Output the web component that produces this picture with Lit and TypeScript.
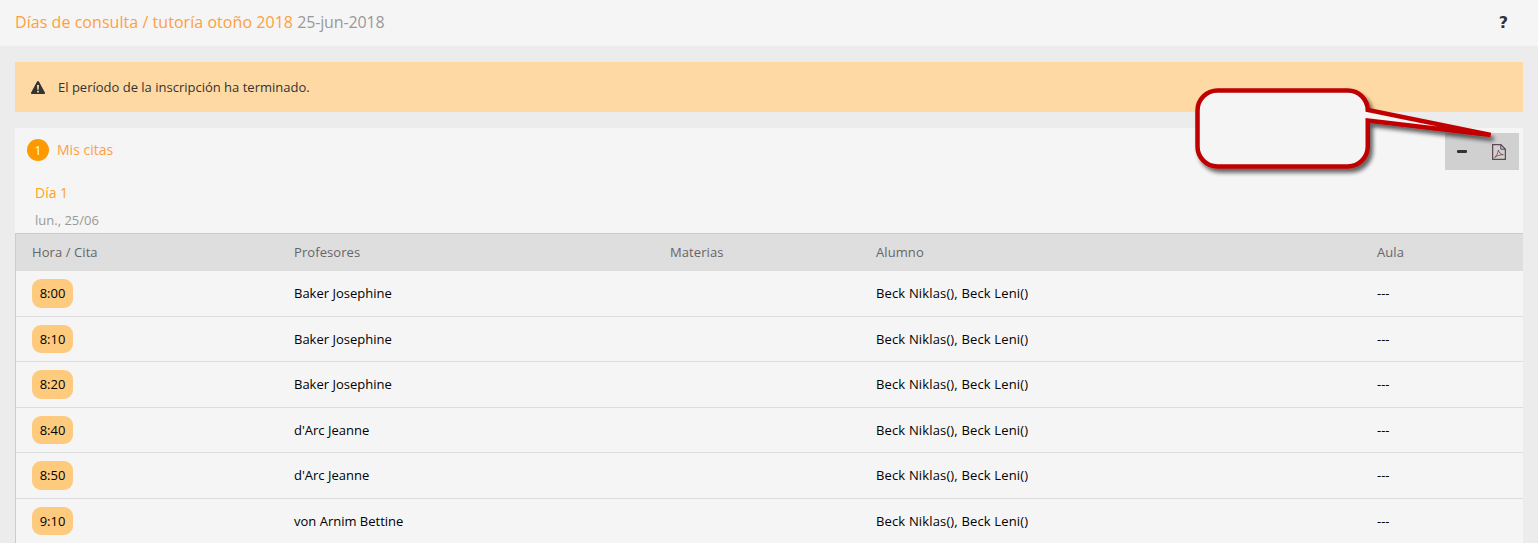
import { LitElement, html, css, svg } from "lit";
import { customElement } from "lit/decorators.js";

const rows = [
  ["8:00", "Baker Josephine"],
  ["8:10", "Baker Josephine"],
  ["8:20", "Baker Josephine"],
  ["8:40", "d'Arc Jeanne"],
  ["8:50", "d'Arc Jeanne"],
  ["9:10", "von Arnim Bettine"],
];

@customElement("app-root")
export class AppRoot extends LitElement {
  static styles = css`
    :host {
      display: block;
      position: relative;
      height: 543px;
      overflow: hidden;
      background: #ececec;
      font-family: "Open Sans", sans-serif;
      font-size: 13px;
      color: #000;
    }
    .top {
      height: 46px;
      box-sizing: border-box;
      background: #f5f5f5;
      padding: 0 30px 2px 15px;
      display: flex;
      align-items: center;
      justify-content: space-between;
      font-size: 16px;
    }
    .title { color: #ff9f40; letter-spacing: .05px; }
    .date { color: #999; letter-spacing: -.15px; }
    .help { font-size: 16px; font-weight: 700; color: #333; font-family: "DejaVu Sans", sans-serif; }
    .alert {
      margin: 16px 15px;
      height: 50px;
      box-sizing: border-box;
      background: #fed9a3;
      padding-left: 16px;
      display: flex;
      align-items: center;
      gap: 13px;
      color: #333;
    }
    .alert svg { width: 14px; height: 13px; flex: none; }
    .panel {
      margin: 0 15px;
      background: #f5f5f5;
      position: relative;
    }
    .panel-head {
      height: 44px;
      box-sizing: border-box;
      padding: 0 0 2px 12px;
      display: flex;
      align-items: center;
      gap: 8px;
      font-size: 14px;
      color: #ff9f40;
    }
    .num {
      width: 22px;
      height: 22px;
      margin-top: 2px;
      border-radius: 50%;
      background: #ff9900;
      color: #fff;
      font-size: 12px;
      display: flex;
      align-items: center;
      justify-content: center;
    }
    .tools {
      position: absolute;
      top: 5px;
      right: 4px;
      width: 74px;
      height: 37px;
      background: #d0d0d0;
    }
    .tools .minus {
      position: absolute;
      left: 12px;
      top: 17px;
      width: 10px;
      height: 3px;
      border-radius: 1px;
      background: #333;
    }
    .tools svg { position: absolute; left: 47px; top: 11px; width: 14px; height: 16px; }
    .day { padding: 11px 0 0 20px; font-size: 14px; line-height: 20px; color: #ffa31a; }
    .sub { padding: 8px 0 0 20px; line-height: 18px; height: 18px; color: #999; margin-bottom: 4px; }
    .table { border-left: 1px solid #ccc; }
    .row {
      display: grid;
      grid-template-columns: 262px 376px 206px 501px 1fr;
      align-items: center;
      height: 45.5px;
      box-sizing: border-box;
      border-bottom: 1px solid #ddd;
    }
    .row > div { padding-left: 16px; }
    .name { letter-spacing: .15px; }
    .row.head {
      height: 38px;
      padding-bottom: 1px;
      background: #dedede;
      border-top: 1px solid #ccc;
      border-bottom: 0;
      color: #666;
      letter-spacing: .08px;
    }
    .badge {
      display: inline-flex;
      width: 41px;
      height: 28.5px;
      border-radius: 9px;
      background: #fecb7e;
      align-items: center;
      justify-content: center;
    }
    .callout {
      position: absolute;
      left: 1190px;
      top: 84px;
      width: 310px;
      height: 95px;
      overflow: visible;
    }
  `;

  render() {
    return html`
      <div class="top">
        <div><span class="title">Días de consulta / tutoría otoño 2018</span> <span class="date">25-jun-2018</span></div>
        <span class="help">?</span>
      </div>
      <div class="alert">
        <svg viewBox="0 0 14 13"><path fill="#333" fill-rule="evenodd" d="M7 0c.4 0 .7.2.9.5l6 11c.3.6-.1 1.500-.9 1.500H1c-.8 0-1.200-.9-.9-1.500l6-11C6.300.2 6.600 0 7 0zM6 4l.3 4.800h1.400L8 4zM6.100 9.700v1.700h1.800V9.700z"/></svg>
        <span>El período de la inscripción ha terminado.</span>
      </div>
      <div class="panel">
        <div class="panel-head"><span class="num">1</span><span>Mis citas</span></div>
        <div class="tools">
          <span class="minus"></span>
          <svg viewBox="0 0 14 16" fill="none">
            <path d="M.6.6h8.200l4.600 4.600v10.200H.6z" stroke="#5f4a50" stroke-width="1.300"/>
            <path d="M8.800.6v4.600h4.600" stroke="#4e3f70" stroke-width="1"/>
            <path d="M2.500 13.500c1.800-1.200 3.300-4 3.900-7.500.7 2.800 2.300 4.200 4.900 4.700-3 0-6 .8-8.800 2.800z" stroke="#7a3f3e" stroke-width=".8"/>
          </svg>
        </div>
        <div class="day">Día 1</div>
        <div class="sub">lun., 25/06</div>
        <div class="table">
          <div class="row head"><div>Hora / Cita</div><div>Profesores</div><div>Materias</div><div>Alumno</div><div>Aula</div></div>
          ${rows.map(
            ([t, p]) => html`<div class="row">
              <div><span class="badge">${t}</span></div>
              <div>${p}</div>
              <div></div>
              <div class="name">Beck Niklas(), Beck Leni()</div>
              <div>---</div>
            </div>`
          )}
        </div>
      </div>
      <svg class="callout" viewBox="0 0 310 95">
        <defs>
          <filter id="s" x="-10%" y="-20%" width="120%" height="150%">
            <feGaussianBlur in="SourceAlpha" stdDeviation="2"/>
            <feOffset dx="3" dy="4"/>
            <feComponentTransfer><feFuncA type="linear" slope=".6"/></feComponentTransfer>
            <feMerge><feMergeNode/><feMergeNode in="SourceGraphic"/></feMerge>
          </filter>
        </defs>
        ${svg`<path filter="url(#s)" fill="#f5f5f5" stroke="#c00000" stroke-width="4.500" stroke-linejoin="miter"
          d="M27.500 6.500H157.750a20 20 0 0 1 20 19.500L300.700 51 177.750 36.500V62.500a20 20 0 0 1-20 20H27.500a20 20 0 0 1-20-20V26.500a20 20 0 0 1 20-20z"/>`}
      </svg>
    `;
  }
}
